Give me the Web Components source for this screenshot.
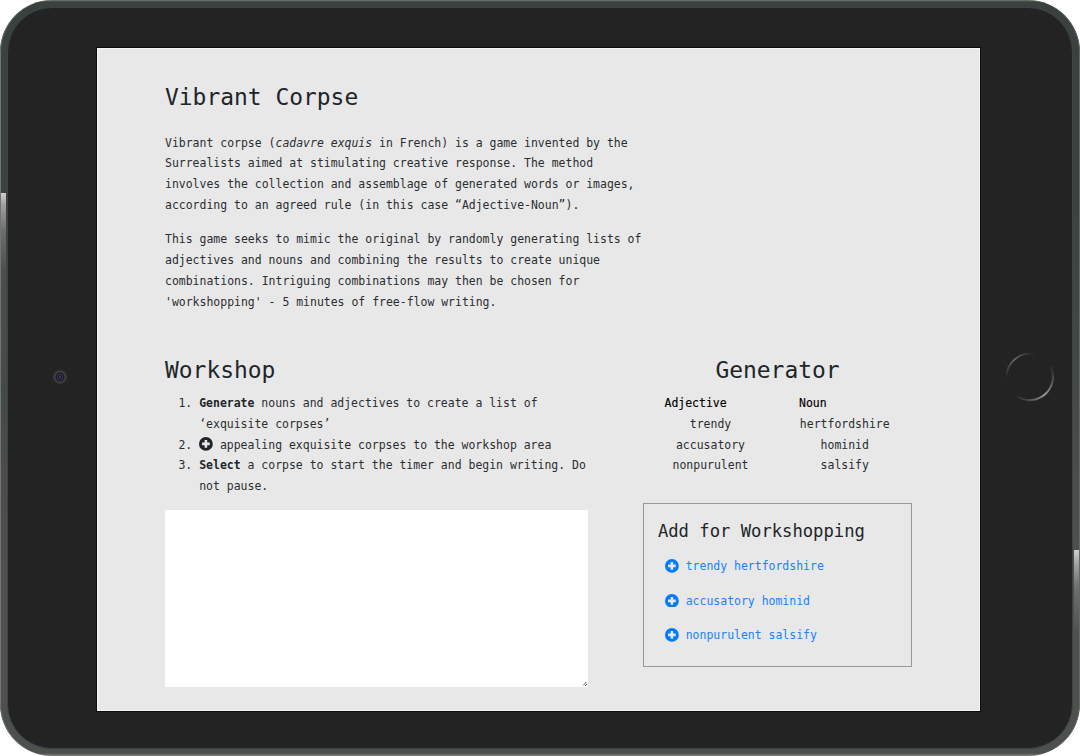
<!DOCTYPE html>
<html lang="en">
<head>
<meta charset="utf-8">
<title>Vibrant Corpse</title>
<style>
html, body { margin: 0; background: #fff; }
body { width: 1080px; height: 756px; overflow: hidden; font-family: "DejaVu Sans Mono", monospace; }
</style>
</head>
<body>
<tablet-frame>
  <corpse-app>
    <intro-section slot="intro"></intro-section>
    <workshop-panel slot="workshop"></workshop-panel>
    <generator-panel slot="generator"></generator-panel>
  </corpse-app>
</tablet-frame>
<script>
const define = (name, html) => customElements.define(name, class extends HTMLElement {
  constructor() {
    super();
    this.attachShadow({ mode: 'open' }).innerHTML = html;
  }
});
const heading = 'h1,h2{margin:0;font-weight:400;font-size:22.93px;line-height:33px;height:33px;color:#212529;white-space:nowrap;}';

define('tablet-frame', `
<style>
:host{display:block;position:relative;box-sizing:border-box;width:1080px;height:756px;padding:7px;border-radius:52px;overflow:hidden;
  background:linear-gradient(#727873 0,#3b413c 2px,#3b413c 180px,#4e504d 560px,#4e504d 753px,#80827f 756px);}
.glint{position:absolute;width:6px;}
.left{left:0;top:193px;height:190px;background:linear-gradient(#d0d0d0 0,#a0a0a0 12px,#6c6e6d 38px,#4b4e4c 80px,#474a47 100%);}
.right{right:0;top:550px;height:130px;background:linear-gradient(#d0d0d0 0,#a0a0a0 14px,#6d6e6d 38px,#4e504d 85px);}
.edge{position:absolute;inset:0;border-radius:52px;box-shadow:inset 1px 0 #727571,inset -1px 0 #656965;}
.face{position:relative;box-sizing:border-box;width:100%;height:100%;border:1px solid #3d4250;border-radius:45px;background:#232323;
  display:grid;grid-template-columns:89px 883px 1fr;grid-template-rows:40px 663px 1fr;}
.screen{grid-column:2;grid-row:2;background:#e8e8e8;box-shadow:0 0 0 1px #0c0c0c;}
.camera{grid-column:1;grid-row:2;justify-self:end;margin:322px 30.500px 0 0;width:14px;height:14px;}
.home{grid-column:3;grid-row:2;margin:304px 0 0 25px;width:50px;height:50px;}
svg{display:block;}
</style>
<div class="glint left"></div><div class="glint right"></div><div class="edge"></div>
<div class="face">
  <svg class="camera" viewBox="0 0 14 14"><circle cx="7" cy="7" r="7" fill="#3a3a3a"/><circle cx="7" cy="7" r="4.300" fill="#17151d"/><circle cx="7" cy="7" r="2.700" fill="none" stroke="#393158" stroke-width="1.300"/><circle cx="7" cy="7" r="1" fill="#4b4664"/></svg>
  <div class="screen"><slot></slot></div>
  <svg class="home" viewBox="0 0 50 50"><defs>
    <linearGradient id="a" x1="0" y1="1" x2="1" y2="0"><stop offset="0" stop-color="#232323"/><stop offset=".5" stop-color="#6a6a6a"/><stop offset="1" stop-color="#232323"/></linearGradient>
    <linearGradient id="b" x1="0" y1="1" x2="1" y2="0"><stop offset="0" stop-color="#232323"/><stop offset=".45" stop-color="#999"/><stop offset="1" stop-color="#232323"/></linearGradient></defs>
    <path d="M1.500 26A23.500 23.500 0 0 1 30 2.200" fill="none" stroke="url(#a)" stroke-width="1.700"/>
    <path d="M45.500 14A23.500 23.500 0 0 1 12 44.500" fill="none" stroke="url(#b)" stroke-width="2"/></svg>
</div>`);

define('corpse-app', `
<style>
:host{display:grid;box-sizing:border-box;height:663px;grid-template-columns:423.5px 268px;column-gap:55px;
 grid-template-rows:273px 1fr;color:#2b2e31;font-size:11.48px;line-height:20.75px;border:1px solid #f5f5f5;padding:32px 66px 22px 67px;}
.intro{grid-column:1/3;}
</style><div class="intro"><slot name="intro"></slot></div><div><slot name="workshop"></slot></div><div><slot name="generator"></slot></div>`);

define('intro-section', `
<style>:host{display:block;width:480px;}${heading}
p{margin:0 0 13.800px;white-space:nowrap;} h1{margin-bottom:18.500px;}</style>
<h1>Vibrant Corpse</h1>
<p>Vibrant corpse (<i>cadavre exquis</i> in French) is a game invented by the<br>Surrealists aimed at stimulating creative response. The method<br>involves the collection and assemblage of generated words or images,<br>according to an agreed rule (in this case “Adjective-Noun”).</p>
<p>This game seeks to mimic the original by randomly generating lists of<br>adjectives and nouns and combining the results to create unique<br>combinations. Intriguing combinations may then be chosen for<br>'workshopping' - 5 minutes of free-flow writing.</p>`);

define('plus-icon', `
<style>:host{display:inline-block;width:13.800px;height:13.800px;vertical-align:-2px;}svg{display:block;width:100%;height:100%;}</style>
<svg viewBox="8 8 496 496"><circle cx="256" cy="256" r="248" fill="currentColor"/><path d="M256 118V394M118 256H394" stroke="#e8e8e8" stroke-width="92"/></svg>`);

define('workshop-panel', `
<style>:host{display:block;}${heading}
ol{margin:6px 0 13.250px;padding-left:34.200px;white-space:nowrap;}
b,plus-icon{color:#212529;}
textarea{display:block;box-sizing:border-box;width:423px;height:177px;margin:0;padding:2px;border:0;background:#fff;resize:none;outline:0;}
.pad{position:relative;width:423px;}
.grip{position:absolute;right:1px;bottom:1px;width:4px;height:4px;}
</style>
<h2>Workshop</h2>
<ol><li><b>Generate</b> nouns and adjectives to create a list of<br>‘exquisite corpses’</li><li><plus-icon></plus-icon> appealing exquisite corpses to the workshop area</li><li><b>Select</b> a corpse to start the timer and begin writing. Do<br>not pause.</li></ol>
<div class="pad"><textarea></textarea><svg class="grip" viewBox="0 0 4 4"><path d="M0 3.500L3.500 0M2 4L4 2" stroke="#666" stroke-width="1"/></svg></div>`);

define('generator-panel', `
<style>:host{display:block;}${heading}
h2{text-align:center;}
.cols{display:grid;grid-template-columns:134px 134px;margin-top:6px;height:110px;text-align:center;white-space:nowrap;}
.cols b{display:block;text-align:left;font-weight:400;color:#000;padding-left:21px;-webkit-text-stroke:.15px #000;}
.cols>div+div{padding-left:.500px;}
</style>
<h2>Generator</h2>
<div class="cols"><div><b>Adjective</b>trendy<br>accusatory<br>nonpurulent</div><div><b>Noun</b>hertfordshire<br>hominid<br>salsify</div></div>
<add-box></add-box>`);

define('add-box', `
<style>:host{display:block;box-sizing:border-box;width:269px;height:164px;margin-left:-.600px;border:1px solid #999;padding:15px 14px;}
h3{margin:0 0 12.500px;font-weight:400;font-size:17.200px;line-height:25px;color:#212529;white-space:nowrap;}
a{display:flex;align-items:center;gap:7px;height:20.700px;margin:0 0 13.800px 7px;color:#1683ff;white-space:nowrap;}
plus-icon{color:#007bff;margin-top:-1.500px;}</style>
<h3>Add for Workshopping</h3>
<a><plus-icon></plus-icon>trendy hertfordshire</a><a><plus-icon></plus-icon>accusatory hominid</a><a><plus-icon></plus-icon>nonpurulent salsify</a>`);
</script>
</body>
</html>
